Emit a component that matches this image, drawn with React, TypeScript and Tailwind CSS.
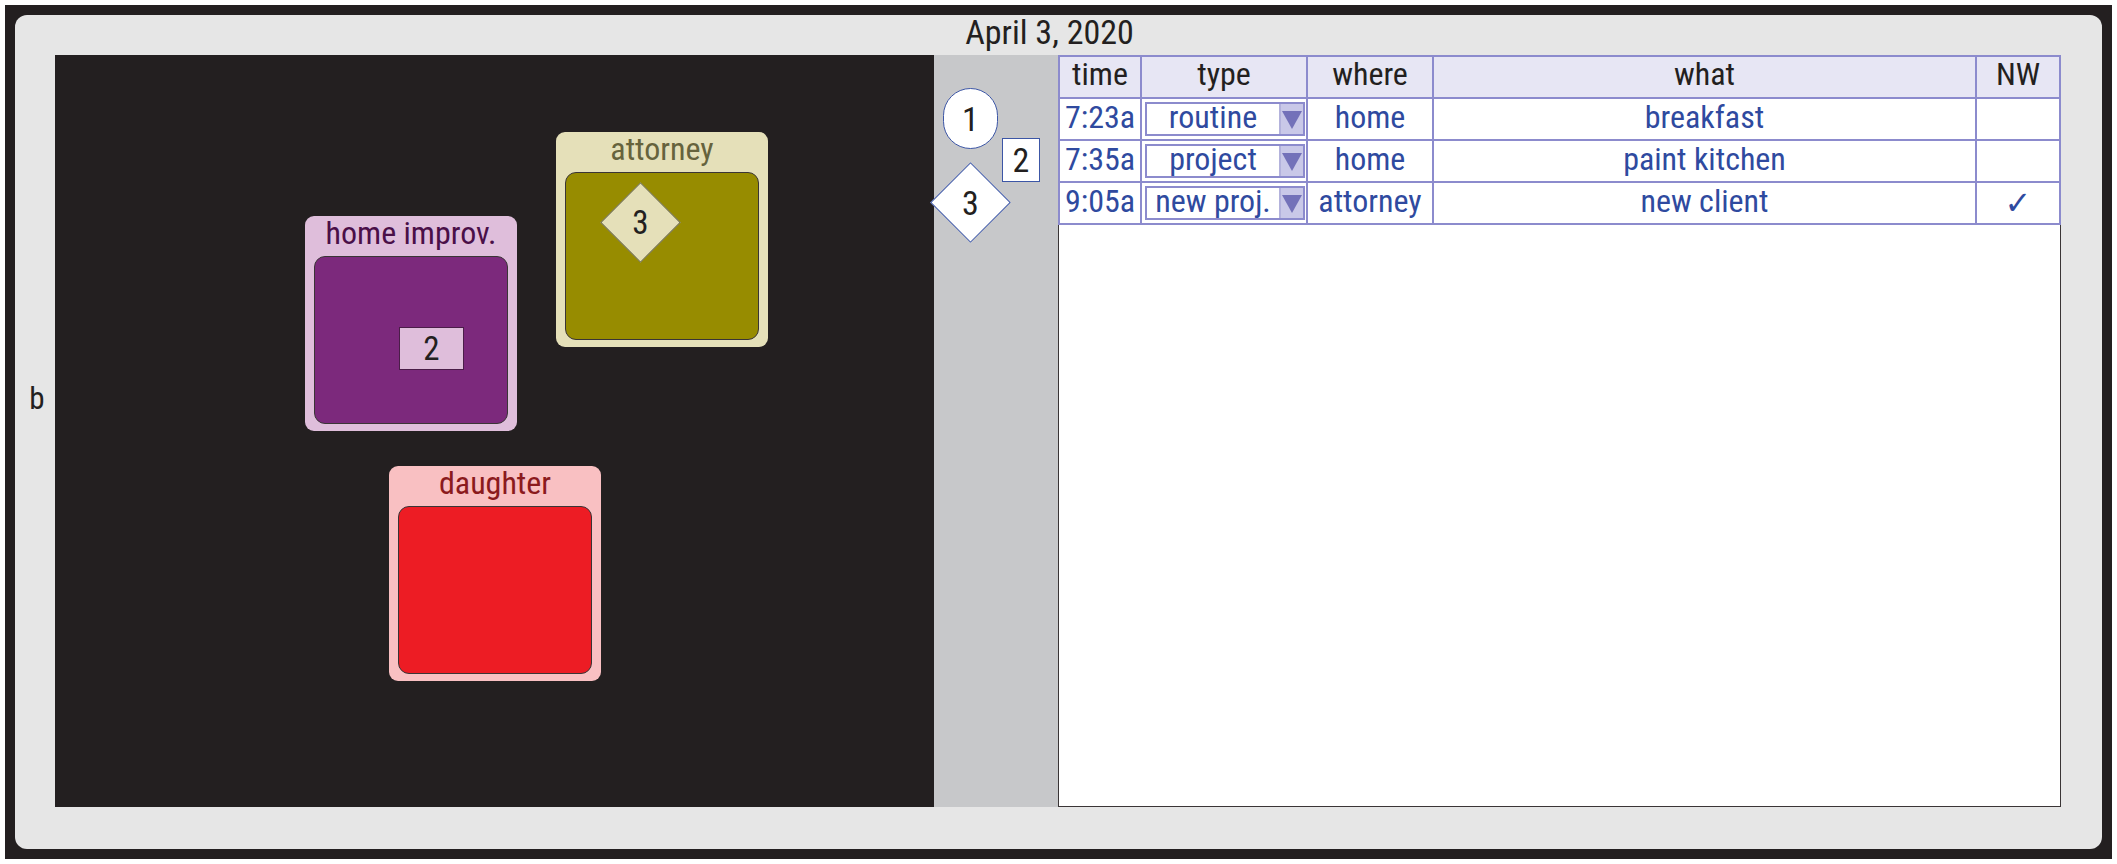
import type { ReactNode } from "react";

const FONT = {
  fontFamily: '"Liberation Sans Narrow", "Roboto Condensed", "DejaVu Sans Condensed", "Liberation Sans", sans-serif',
};

type Row = {
  time: string;
  type: string;
  where: string;
  what: string;
  nw: boolean;
};

const rows: Row[] = [
  { time: "7:23a", type: "routine", where: "home", what: "breakfast", nw: false },
  { time: "7:35a", type: "project", where: "home", what: "paint kitchen", nw: false },
  { time: "9:05a", type: "new proj.", where: "attorney", what: "new client", nw: true },
];

function Card({
  pos,
  outer,
  inner,
  labelColor,
  label,
  children,
}: {
  pos: string;
  outer: string;
  inner: string;
  labelColor: string;
  label: string;
  children?: ReactNode;
}) {
  return (
    <div className={`absolute flex h-[215px] w-[212px] flex-col rounded-[9px] px-[9px] pb-[7px] ${pos} ${outer}`}>
      <div className={`flex h-[40px] items-center justify-center pb-[7px] text-[32px] leading-none ${labelColor}`}>
        {label}
      </div>
      <div className={`relative flex-1 rounded-[11px] border border-[#3a3536] ${inner}`}>{children}</div>
    </div>
  );
}

function Dropdown({ value }: { value: string }) {
  return (
    <div className="ml-[3px] mr-[1px] flex h-[34px] flex-1 border-2 border-[#8c8bcd] bg-white">
      <div className="flex flex-1 items-center justify-center pb-[4px] text-[32px] leading-none text-[#2f4a9f]">
        {value}
      </div>
      <div className="flex w-[24px] items-center justify-center border-l-2 border-[#b3b2dc] bg-[#c9c8e8]">
        <svg width="20" height="20" viewBox="0 0 20 20">
          <polygon points="0,2 20,2 10,20" fill="#7371b9" />
        </svg>
      </div>
    </div>
  );
}

const cell = "flex items-center justify-center border-b-2 border-r-2 border-[#8c8bcd]";

export default function App() {
  return (
    <div className="h-[864px] w-[2117px] bg-white p-[5px] text-[#231f20]" style={FONT}>
      <div className="h-full bg-[#231f20] p-[10px]">
        <div className="flex h-full flex-col rounded-[12px] bg-[#e6e6e6]">
          {/* title */}
          <div className="flex h-[40px] items-center justify-center pb-[6px] pr-[18px] text-[34px] leading-none">
            April 3, 2020
          </div>

          <div className="flex h-[752px]">
            {/* side label */}
            <div className="w-[40px] pl-[4px] pt-[328px] text-center text-[31px] leading-none">b</div>

            {/* canvas */}
            <div className="relative w-[879px] bg-[#231f20]">
              <Card
                pos="left-[501px] top-[77px]"
                outer="bg-[#e5e0b9]"
                inner="bg-[#978c00]"
                labelColor="text-[#66633d]"
                label="attorney"
              >
                <div className="absolute left-[46px] top-[21px] h-[57px] w-[57px] rotate-45 border border-[#6b6840] bg-[#e5e0b9]" />
                <div className="absolute left-[46px] top-[21px] flex h-[57px] w-[57px] items-center justify-center text-[33px] leading-none">
                  3
                </div>
              </Card>

              <Card
                pos="left-[250px] top-[161px]"
                outer="bg-[#dfbedb]"
                inner="bg-[#7c297c]"
                labelColor="text-[#4a0f48]"
                label="home improv."
              >
                <div className="absolute left-[84px] top-[70px] flex h-[43px] w-[65px] items-center justify-center border border-[#4a1d48] bg-[#dfbedb] text-[33px] leading-none">
                  2
                </div>
              </Card>

              <Card
                pos="left-[334px] top-[411px]"
                outer="bg-[#f9c0c2]"
                inner="bg-[#ed1c24]"
                labelColor="text-[#8b1a1d]"
                label="daughter"
              />
            </div>

            {/* marker strip */}
            <div className="relative w-[124px] bg-[#c7c8ca]">
              <div className="absolute left-[9px] top-[33px] flex h-[61px] w-[55px] items-center justify-center rounded-full border-[1.5px] border-[#3c56a6] bg-white text-[34px] leading-none">
                1
              </div>
              <div className="absolute left-[68px] top-[83px] flex h-[44px] w-[38px] items-center justify-center border-[1.5px] border-[#3c56a6] bg-white text-[34px] leading-none">
                2
              </div>
              <div className="absolute left-[8px] top-[119px] h-[57px] w-[57px] rotate-45 border-[1.5px] border-[#3c56a6] bg-white" />
              <div className="absolute left-[8px] top-[119px] flex h-[57px] w-[57px] items-center justify-center text-[34px] leading-none">
                3
              </div>
            </div>

            {/* log table */}
            <div className="w-[1003px] border-x border-b border-[#3a3536] bg-white">
              <div className="-mx-px grid grid-cols-[84px_166px_126px_543px_84px]">
                {["time", "type", "where", "what", "NW"].map((h, i) => (
                  <div
                    key={h}
                    className={`${cell} h-[44px] border-t-2 bg-[#e7e6f4] pb-[7px] text-[32px] leading-none ${i === 0 ? "border-l-2" : ""}`}
                  >
                    {h}
                  </div>
                ))}
                {rows.map((r) => (
                  <div key={r.time} className="contents text-[32px] leading-none text-[#2f4a9f]">
                    <div className={`${cell} h-[42px] border-l-2 pb-[5px]`}>{r.time}</div>
                    <div className={`${cell} h-[42px]`}>
                      <Dropdown value={r.type} />
                    </div>
                    <div className={`${cell} h-[42px] pb-[5px]`}>{r.where}</div>
                    <div className={`${cell} h-[42px] pb-[5px]`}>{r.what}</div>
                    <div className={`${cell} h-[42px] text-[32px]`} style={{ fontFamily: '"DejaVu Sans", sans-serif' }}>
                      {r.nw ? "✓" : ""}
                    </div>
                  </div>
                ))}
              </div>
            </div>
          </div>
        </div>
      </div>
    </div>
  );
}
